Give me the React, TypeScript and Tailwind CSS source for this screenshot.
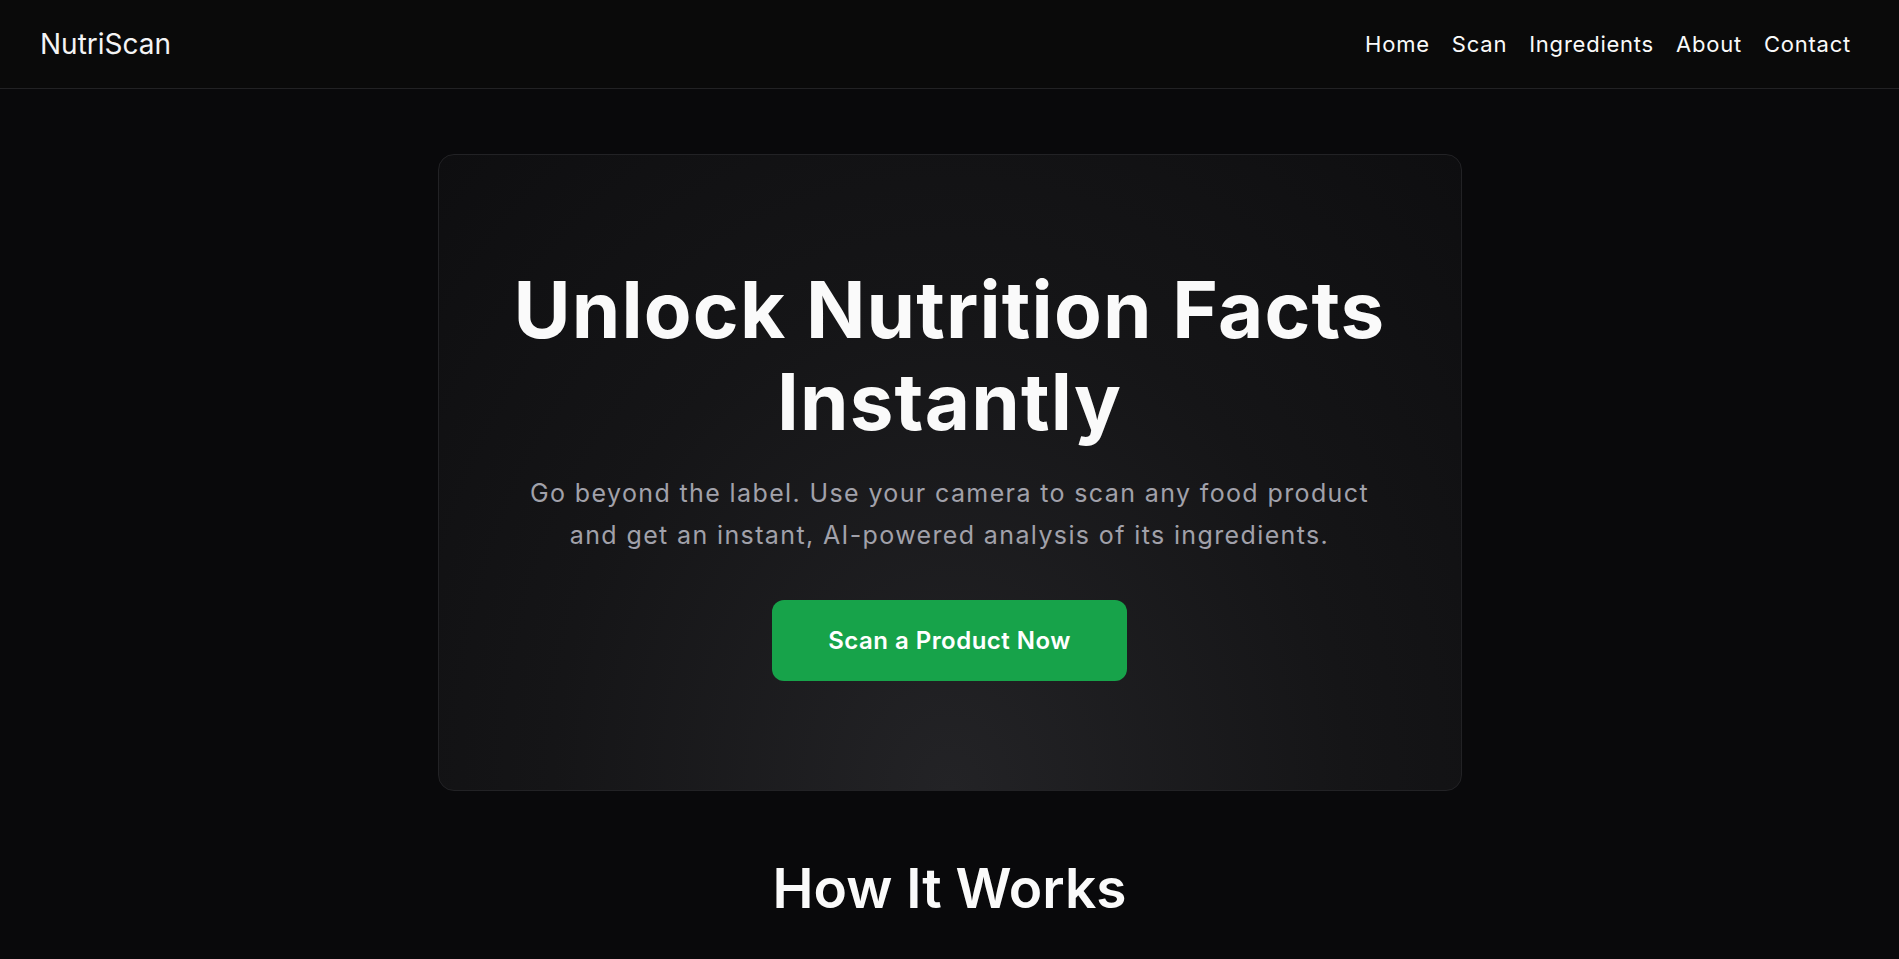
import { useState } from "react";

const links = ["Home", "Scan", "Ingredients", "About", "Contact"];

function Navbar() {
  return (
    <header className="h-[89px] border-b border-[#222224] bg-[#0a0a0a]">
      <div className="flex h-full items-center justify-between px-10">
        <a href="#" className="text-[28px] font-normal text-[#f4f4f5]">
          NutriScan
        </a>
        <nav className="flex items-center gap-1.5">
          {links.map((l) => (
            <a key={l} href="#" className="px-2 text-[22px] tracking-[0.035em] text-[#fafafa]">
              {l}
            </a>
          ))}
        </nav>
      </div>
    </header>
  );
}

function Hero() {
  const [pressed, setPressed] = useState(false);
  return (
    <section className="px-6 pt-[65px]">
      <div className="mx-auto max-w-5xl rounded-2xl border border-[#222225] bg-[radial-gradient(ellipse_at_bottom,#232326_0%,#151517_55%,#0e0e10_100%)] px-10 py-[109px] text-center">
        <h1 className="text-[78px] font-bold leading-[92px] tracking-[0.015em] text-[#fafafa]">
          Unlock Nutrition Facts
          <br />
          Instantly
        </h1>
        <p className="mx-auto mt-6 max-w-[870px] text-[25px] leading-[42px] tracking-[0.055em] text-[#a1a1aa]">
          Go beyond the label. Use your camera to scan any food product and get an instant,
          AI-powered analysis of its ingredients.
        </p>
        <button
          onClick={() => setPressed(!pressed)}
          className="mt-[44px] h-[81px] w-[355px] rounded-xl bg-[#17a34a] text-[24px] font-semibold tracking-[0.02em] text-white hover:bg-green-700"
        >
          Scan a Product Now
        </button>
      </div>
    </section>
  );
}

export default function App() {
  return (
    <div className="min-h-screen bg-[#09090b] font-['Inter',sans-serif]">
      <Navbar />
      <Hero />
      <section className="pt-16 pb-24 text-center">
        <h2 className="text-[55px] font-semibold leading-[67px] text-[#fafafa]">
          How It Works
        </h2>
      </section>
    </div>
  );
}
